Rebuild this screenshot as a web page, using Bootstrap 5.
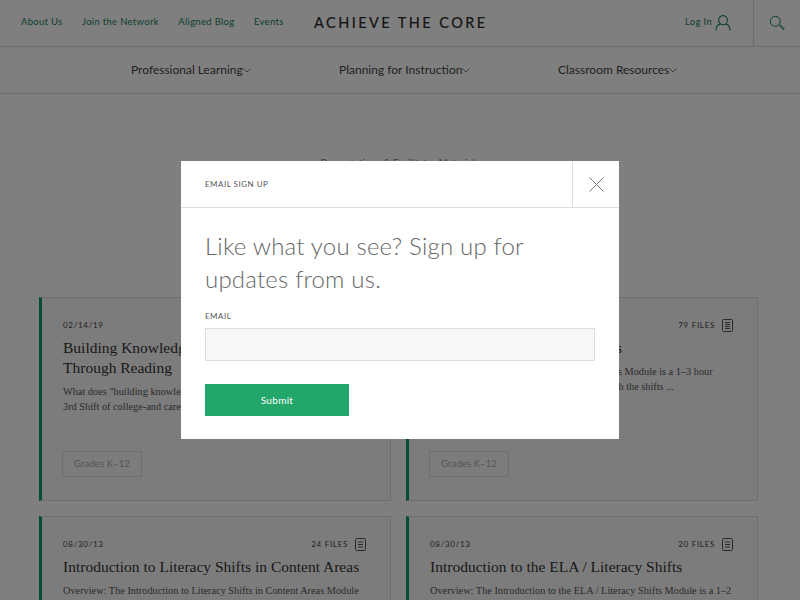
<!DOCTYPE html>
<html lang="en">
<head>
  <meta charset="UTF-8" />
  <meta name="viewport" content="width=device-width, initial-scale=1.0"/>
  <title>Achieve the Core</title>
  <link href="https://cdn.jsdelivr.net/npm/bootstrap@5.3.3/dist/css/bootstrap.min.css" rel="stylesheet">
  <style>
    body {
      font-family: "Lato", "Liberation Sans", sans-serif;
      background: #fff;
      color: #333;
      overflow: hidden;
    }
    .top-bar {
      height: 47px;
      border-bottom: 1px solid #d8d8d8;
    }
    .top-links {
      width: 314px;
      padding-left: 21px;
      gap: 19.5px;
      font-size: 9.5px;
      letter-spacing: .3px;
      margin-top: -1px;
    }
    .top-links a, .login-link {
      color: #1a8059;
      text-decoration: none;
    }
    .site-logo {
      width: 173px;
      font-size: 14.5px;
      font-weight: 400;
      letter-spacing: 2.45px;
      color: #2a2a2a;
      white-space: nowrap;
      -webkit-text-stroke: .2px #2a2a2a;
    }
    .login-link {
      font-size: 9.5px;
      letter-spacing: .3px;
      margin-right: 22px;
      gap: 3px;
      margin-top: -1px;
    }
    .search-cell {
      width: 47px;
      border-left: 1px solid #d8d8d8;
    }
    .main-nav {
      height: 47px;
      border-bottom: 1px solid #d8d8d8;
      font-size: 12px;
      color: #444;
    }
    .main-nav span { position: absolute; top: 14px; white-space: nowrap; }
    .nav-first { left: 131px; }
    .nav-second { left: 339px; }
    .nav-third { left: 558px; }
    .page-title-small {
      padding-top: 61px;
      height: 203px;
      font-size: 10px;
      color: #777;
    }
    .card-grid {
      display: grid;
      grid-template-columns: 352px 352px;
      gap: 15px;
      margin-left: 39px;
    }
    .module-card {
      height: 204px;
      padding: 20px 24px 23px 21px;
      border: 1px solid #ddd;
      border-left: 3px solid #0a9a62;
      background: #f9f9f9;
      border-radius: 0;
    }
    .meta-row {
      height: 14px;
      font-size: 8px;
      letter-spacing: .7px;
      color: #444;
    }
    .meta-row svg { margin-left: 7px; }
    .module-title {
      font-family: "Liberation Serif", serif;
      font-size: 15.5px;
      line-height: 20px;
      font-weight: 400;
      margin: 6px 0;
      color: #333;
    }
    .module-text {
      font-family: "Liberation Serif", serif;
      font-size: 10.3px;
      line-height: 15px;
      color: #555;
      margin: 0;
    }
    .grade-tag {
      display: block;
      width: 80px;
      height: 26px;
      line-height: 24px;
      text-align: center;
      border: 1px solid #ddd;
      font-size: 9.5px;
      letter-spacing: .1px;
      color: #aaa;
      margin: auto 0 0 -1px;
    }
    .signup-dialog {
      width: 438px;
      max-width: 438px;
      margin: 161px 0 0 181px;
    }
    .signup-dialog .modal-content {
      border: 0;
      border-radius: 0;
      height: 278px;
    }
    .signup-head {
      height: 47px;
      padding-left: 24px;
      border-bottom: 1px solid #ddd;
      font-size: 8px;
      letter-spacing: .5px;
      color: #555;
    }
    .close-cell {
      width: 47px;
      height: 46px;
      border-left: 1px solid #ddd;
    }
    .signup-body { padding: 21px 24px 0; }
    .signup-heading {
      font-size: 24px;
      font-weight: 300;
      line-height: 33px;
      letter-spacing: .2px;
      color: #666;
      margin-bottom: 15px;
    }
    .signup-label {
      display: block;
      font-size: 8px;
      letter-spacing: .5px;
      color: #555;
      line-height: 12px;
      margin-bottom: 6px;
    }
    .signup-input {
      height: 33px;
      border: 1px solid #ddd;
      border-radius: 0;
      background: #f7f7f7;
      margin-bottom: 23px;
    }
    .signup-btn {
      width: 144px;
      height: 32px;
      padding: 0;
      border: 0;
      border-radius: 0;
      background: #22a669;
      color: #fff;
      font-size: 10px;
      letter-spacing: .3px;
    }
  </style>
</head>
<body>
  <!-- Header -->
  <header class="top-bar d-flex align-items-center">
    <nav class="top-links d-flex align-items-center">
      <a href="#">About Us</a>
      <a href="#">Join the Network</a>
      <a href="#">Aligned Blog</a>
      <a href="#">Events</a>
    </nav>
    <div class="site-logo">ACHIEVE THE CORE</div>
    <div class="flex-grow-1 d-flex justify-content-end align-items-center align-self-stretch">
      <a href="#" class="login-link d-flex align-items-center">Log In
        <svg width="16" height="16" viewBox="0 0 16 16" fill="none" stroke="#1a8059" stroke-width="1.1">
          <ellipse cx="8" cy="5.2" rx="4.400" ry="4.600"/>
          <path d="M1 15.500c0-4 2-6 4.200-6.400M15 15.500c0-4-2-6-4.200-6.400"/>
        </svg>
      </a>
      <div class="search-cell align-self-stretch d-flex align-items-center justify-content-center">
        <svg width="16" height="16" viewBox="0 0 16 16" fill="none" stroke="#1a8059" stroke-width="1">
          <circle cx="6.300" cy="6.300" r="5"/>
          <path d="M10 10l4.600 4.800M11.400 9.600l3.800 4.200-1 1"/>
        </svg>
      </div>
    </div>
  </header>

  <nav class="main-nav position-relative">
    <span class="nav-first">Professional Learning<svg width="8" height="5" viewBox="0 0 8 5" fill="none" stroke="#777"><path d="M.5.500l3.500 3.500 3.500-3.500"/></svg></span>
    <span class="nav-second">Planning for Instruction<svg width="8" height="5" viewBox="0 0 8 5" fill="none" stroke="#777"><path d="M.5.500l3.500 3.500 3.500-3.500"/></svg></span>
    <span class="nav-third">Classroom Resources<svg width="8" height="5" viewBox="0 0 8 5" fill="none" stroke="#777"><path d="M.5.500l3.500 3.500 3.500-3.500"/></svg></span>
  </nav>

  <div class="page-title-small text-center">Presentations &amp; Facilitator Materials</div>

  <!-- Modules -->
  <div class="card-grid">
    <div class="card module-card">
      <div class="meta-row d-flex justify-content-between align-items-center">
        <span>02/14/19</span>
      </div>
      <h3 class="module-title">Building Knowledge in the Classroom<br>Through Reading</h3>
      <p class="module-text">What does "building knowledge" look like in the classroom? The<br>3rd Shift of college-and career-ready standards ...</p>
      <span class="grade-tag">Grades K–12</span>
    </div>
    <div class="card module-card">
      <div class="meta-row d-flex justify-content-end align-items-center">
        <span>79 FILES</span>
        <svg width="11" height="13" viewBox="0 0 11 13" fill="none" stroke="#555"><rect x=".5" y=".5" width="10" height="12" rx="1"/><path d="M3 3.500h5M3 5.500h5M3 7.500h5M3 9.500h5"/></svg>
      </div>
      <h3 class="module-title">Introduction to the Math Shifts</h3>
      <p class="module-text">Overview: The Introduction to the Math Shifts Module is a 1–3 hour<br>experience to familiarize new participants with the shifts ...</p>
      <span class="grade-tag">Grades K–12</span>
    </div>
    <div class="card module-card">
      <div class="meta-row d-flex justify-content-between align-items-center">
        <span>08/30/13</span>
        <span class="d-flex align-items-center">24 FILES
          <svg width="11" height="13" viewBox="0 0 11 13" fill="none" stroke="#555"><rect x=".5" y=".5" width="10" height="12" rx="1"/><path d="M3 4h5M3 6.500h5M3 9h5"/></svg>
        </span>
      </div>
      <h3 class="module-title">Introduction to Literacy Shifts in Content Areas</h3>
      <p class="module-text">Overview: The Introduction to Literacy Shifts in Content Areas Module</p>
    </div>
    <div class="card module-card">
      <div class="meta-row d-flex justify-content-between align-items-center">
        <span>08/30/13</span>
        <span class="d-flex align-items-center">20 FILES
          <svg width="11" height="13" viewBox="0 0 11 13" fill="none" stroke="#555"><rect x=".5" y=".5" width="10" height="12" rx="1"/><path d="M3 4h5M3 6.500h5M3 9h5"/></svg>
        </span>
      </div>
      <h3 class="module-title">Introduction to the ELA / Literacy Shifts</h3>
      <p class="module-text">Overview: The Introduction to the ELA / Literacy Shifts Module is a 1–2</p>
    </div>
  </div>

  <!-- Email sign up -->
  <div class="modal-backdrop show"></div>
  <div class="modal d-block" tabindex="-1">
    <div class="modal-dialog signup-dialog">
      <div class="modal-content">
        <div class="signup-head d-flex justify-content-between align-items-center">
          <span>EMAIL SIGN UP</span>
          <div class="close-cell d-flex align-items-center justify-content-center">
            <svg width="15" height="15" viewBox="0 0 15 15" fill="none" stroke="#777"><path d="M.5.500l14 14M14.500.500l-14 14"/></svg>
          </div>
        </div>
        <form class="signup-body">
          <div class="signup-heading">Like what you see? Sign up for updates from us.</div>
          <label class="signup-label" for="signup_email">EMAIL</label>
          <input id="signup_email" type="email" class="form-control signup-input">
          <button type="button" class="btn signup-btn">Submit</button>
        </form>
      </div>
    </div>
  </div>

  <script src="https://cdn.jsdelivr.net/npm/bootstrap@5.3.3/dist/js/bootstrap.bundle.min.js"></script>
</body>
</html>
